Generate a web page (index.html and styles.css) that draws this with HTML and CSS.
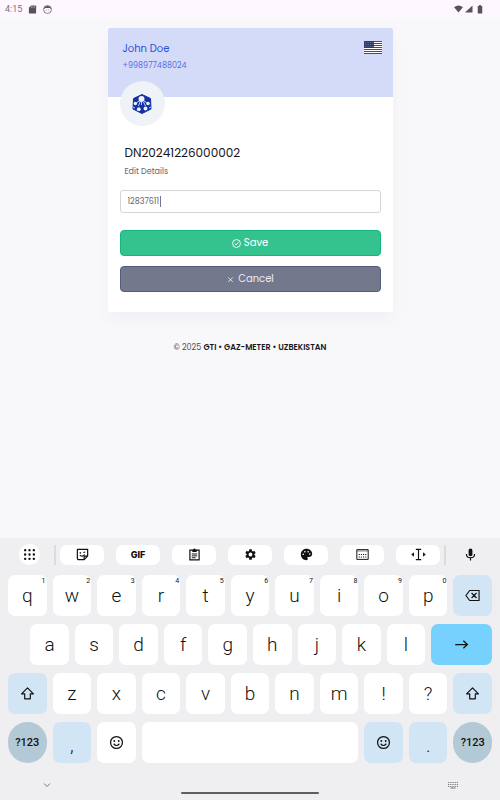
FILE: index.html
```html
<!DOCTYPE html>
<html lang="en">
<head>
  <meta charset="UTF-8">
  <meta name="viewport" content="width=device-width, initial-scale=1.0">
  <title>Edit Details</title>
  <link rel="stylesheet" href="styles.css">
</head>
<body>
  <!-- Shared icons -->
  <svg class="sprite" width="0" height="0" aria-hidden="true">
    <symbol id="shift" viewBox="0 0 24 24">
      <path d="M12 3 L21.5 12.5 H16.5 V20.5 H7.5 V12.5 H2.5 Z" fill="none" stroke="currentColor" stroke-width="1.9" stroke-linejoin="round"/>
    </symbol>
    <symbol id="smile" viewBox="0 0 24 24">
      <circle cx="12" cy="12" r="9.500" fill="none" stroke="currentColor" stroke-width="2"/>
      <circle cx="8.500" cy="9.500" r="1.500"/>
      <circle cx="15.500" cy="9.500" r="1.500"/>
      <path d="M7.500 14 Q12 19.500 16.500 14" fill="none" stroke="currentColor" stroke-width="1.900"/>
    </symbol>
  </svg>

  <header class="status-bar">
    <div class="status-left">
      <span class="clock">4:15</span>
      <svg class="status-icon" viewBox="0 0 10 10"><path d="M3.500 .5 H8 Q9 .5 9 1.500 V8.500 Q9 9.500 8 9.500 H2 Q1 9.500 1 8.500 V3 Z"/><path d="M3.800 1.500 V3 M5.500 1.500 V3 M7.200 1.500 V3" stroke="#fef7ff" stroke-width=".6"/></svg>
      <svg class="status-icon" viewBox="0 0 10 10"><circle cx="5" cy="5" r="4.400" fill="none" stroke="currentColor" stroke-width=".8"/><path d="M.8 4.600 A4.300 4.300 0 0 1 9.200 4.600 L7.500 3.400 H2.500 Z"/><circle cx="3.500" cy="5.600" r=".5"/><circle cx="6.500" cy="5.600" r=".5"/></svg>
    </div>
    <div class="status-right">
      <svg class="wifi" viewBox="0 0 10 9"><path d="M0 2.500 Q5 -1.500 10 2.500 L5 8.500 Z"/></svg>
      <svg class="signal" viewBox="0 0 9 9"><path d="M9 .5 V8.500 H.5 Z"/></svg>
      <svg class="battery" viewBox="0 0 6 10"><path d="M2 0 H4 V1 H5.500 V9.500 H.5 V1 H2 Z"/></svg>
    </div>
  </header>

  <main>
    <div class="card">
      <div class="card-top">
        <div>
          <h5 class="user-name">John Doe</h5>
          <p class="user-phone">+998977488024</p>
        </div>
        <svg class="flag" viewBox="0 0 18 13">
          <rect width="18" height="13" fill="#fff"/>
          <path d="M0 .5 H18 M0 2.500 H18 M0 4.500 H18 M0 6.500 H18 M0 8.500 H18 M0 10.500 H18 M0 12.500 H18" stroke="#bf1a2c"/>
          <rect width="10" height="7" fill="#2c3a68"/>
          <path d="M1 1.500 H10 M1 3.500 H10 M1 5.500 H10" stroke="#8f98b8" stroke-width=".7" stroke-dasharray=".7 1"/>
        </svg>
      </div>
      <div class="card-body">
        <div class="avatar">
          <svg viewBox="0 0 20 20">
            <path d="M10 .5 L18.500 4.500 L19 15 L10 19.500 L1 15 L1.500 4.500 Z" fill="#1231a5" stroke="#1231a5" stroke-linejoin="round"/>
            <g fill="#eff2f7">
              <circle cx="9.500" cy="5" r="3"/>
              <circle cx="3.400" cy="9.500" r="1.700"/>
              <circle cx="16" cy="9.500" r="1.800"/>
              <circle cx="6.800" cy="15.200" r="1.900"/>
              <circle cx="13.500" cy="14.500" r="1.900"/>
            </g>
            <path d="M9.500 8 V11 M7.500 7 L4.500 8.500 M12 7 L14.500 8.500 M8 8 L6.500 12 M11.500 8 L13.500 12 M1 13 L3 14 M19 13 L17 14" stroke="#eff2f7" stroke-width=".8"/>
          </svg>
        </div>
        <form>
          <label for="meter" class="meter-label">
            <span class="meter-number">DN20241226000002</span>
            <span class="meter-hint">Edit Details</span>
          </label>
          <div class="field">
            <input type="text" id="meter" class="form-control" value="12837611">
            <span class="caret"></span>
          </div>
          <button type="submit" class="btn btn-save">
            <svg viewBox="0 0 24 24"><circle cx="12" cy="12" r="10.500"/><path d="M7 12.500 L10.500 16 L17 8.500"/></svg>
            Save
          </button>
          <button type="button" class="btn btn-cancel">
            <svg viewBox="0 0 24 24"><path d="M6 6.500 L18 18.500 M18 6.500 L6 18.500"/></svg>
            Cancel
          </button>
        </form>
      </div>
    </div>
    <footer class="footer">© 2025 <b>GTI • GAZ-METER • UZBEKISTAN</b></footer>
  </main>

  <section class="keyboard">
    <div class="toolbar">
      <button class="tool-round" aria-label="Menu"><svg viewBox="0 0 12 12"><path d="M2 2h0 M6 2h0 M10 2h0 M2 6h0 M6 6h0 M10 6h0 M2 10h0 M6 10h0 M10 10h0" stroke="currentColor" stroke-width="2.200" stroke-linecap="round"/></svg></button>
      <div class="chips">
        <button class="chip" aria-label="Stickers"><svg viewBox="0 0 24 24"><path d="M3 2.500 H21.500 V15 L15 21.500 H5 Q2.500 21.500 2.500 19 V3 Z M21 15 H15 V21" fill="none" stroke="currentColor" stroke-width="2.200"/><circle cx="8" cy="9" r="1.400"/><path d="M13.500 8.500 L17 7.500 M7 13 Q12 17.500 16 12" fill="none" stroke="currentColor" stroke-width="2"/></svg></button>
        <button class="chip gif">GIF</button>
        <button class="chip" aria-label="Clipboard"><svg viewBox="0 0 24 24"><path d="M3.500 4 H20.500 V22 H3.500 Z" fill="none" stroke="currentColor" stroke-width="2.200"/><path d="M8 3 H10 Q10 1 12 1 Q14 1 14 3 H16 V7.500 H8 Z"/><path d="M7 11 H17 M7 14.500 H17 M7 18 H14" stroke="currentColor" stroke-width="1.800"/></svg></button>
        <button class="chip" aria-label="Settings"><svg viewBox="0 0 24 24"><path d="M19.140 12.940c.04-.3.060-.61.060-.94s-.02-.64-.07-.94l2.030-1.580c.18-.14.230-.41.120-.61l-1.920-3.320c-.12-.22-.37-.29-.59-.22l-2.390.96c-.5-.38-1.030-.7-1.620-.94l-.36-2.540c-.04-.24-.24-.41-.48-.41h-3.840c-.24 0-.43.170-.47.410l-.36 2.540c-.59.240-1.130.570-1.620.940l-2.390-.96c-.22-.08-.47 0-.59.220L2.740 8.870c-.12.210-.08.470.12.610l2.030 1.580c-.05.300-.09.630-.09.940s.02.640.07.940l-2.030 1.580c-.18.140-.23.410-.12.610l1.920 3.320c.12.220.37.290.59.220l2.390-.96c.5.380 1.030.7 1.620.940l.36 2.540c.05.240.24.410.48.410h3.840c.24 0 .44-.17.47-.41l.36-2.540c.59-.24 1.130-.56 1.620-.94l2.390.96c.22.080.47 0 .59-.22l1.920-3.320c.12-.22.070-.47-.12-.61l-2.010-1.580zM12 15.600A3.600 3.600 0 1 1 12 8.400A3.600 3.600 0 0 1 12 15.600z"/></svg></button>
        <button class="chip" aria-label="Theme"><svg viewBox="0 0 24 24"><path d="M12 1.500C6 1.500 1.500 6.500 1.500 12s4.500 10.500 10.500 10.500c1.400 0 2.500-1.100 2.500-2.500 0-.6-.2-1.200-.6-1.700-.6-.7-.1-1.800.9-1.800H17c3 0 5.500-2.500 5.500-5.500C22.500 5.500 17.500 1.500 12 1.500z"/><g fill="#fff"><circle cx="6" cy="11.500" r="1.500"/><circle cx="9" cy="7" r="1.500"/><circle cx="15" cy="7" r="1.500"/><circle cx="18" cy="11" r="1.500"/></g></svg></button>
        <button class="chip" aria-label="Resize"><svg viewBox="0 0 24 24"><path d="M1.500 3 H22.500 V21 H1.500 Z" fill="none" stroke="currentColor" stroke-width="1.800"/><path d="M2 5.500 H22" stroke="currentColor" stroke-width="1"/><path d="M5 12 H20 M5 16.500 H20" stroke="currentColor" stroke-width="2" stroke-dasharray="2 2"/></svg></button>
        <button class="chip" aria-label="Text editing"><svg class="wide" viewBox="0 0 28 24"><path d="M9 2.500 H19 M14 2.500 V21.500 M9 21.500 H19" stroke="currentColor" stroke-width="2.200"/><path d="M5.500 8 V16 L.5 12 Z M22.500 8 V16 L27.500 12 Z"/></svg></button>
      </div>
      <button class="mic" aria-label="Voice input"><svg viewBox="0 0 24 24"><rect x="8.500" y="1" width="7" height="14" rx="3.500"/><path d="M4.500 11 Q4.500 18 12 18 Q19.500 18 19.500 11 M12 18 V23" fill="none" stroke="currentColor" stroke-width="2.200"/></svg></button>
    </div>

    <div class="keys">
      <button class="key">q<sup>1</sup></button>
      <button class="key">w<sup>2</sup></button>
      <button class="key">e<sup>3</sup></button>
      <button class="key">r<sup>4</sup></button>
      <button class="key">t<sup>5</sup></button>
      <button class="key">y<sup>6</sup></button>
      <button class="key">u<sup>7</sup></button>
      <button class="key">i<sup>8</sup></button>
      <button class="key">o<sup>9</sup></button>
      <button class="key">p<sup>0</sup></button>
      <button class="key key-blue" aria-label="Backspace"><svg viewBox="0 0 24 24"><path d="M7.500 4 H22.500 V20 H7.500 L1.500 12 Z M10.500 8 L18.500 16 M18.500 8 L10.500 16" fill="none" stroke="currentColor" stroke-width="1.800"/></svg></button>

      <button class="key key-indent">a</button>
      <button class="key">s</button>
      <button class="key">d</button>
      <button class="key">f</button>
      <button class="key">g</button>
      <button class="key">h</button>
      <button class="key">j</button>
      <button class="key">k</button>
      <button class="key">l</button>
      <button class="key key-enter" aria-label="Enter"><svg viewBox="0 0 24 24"><path d="M2 12 H21 M15 6 L21.500 12 L15 18" fill="none" stroke="currentColor" stroke-width="2"/></svg></button>

      <button class="key key-blue" aria-label="Shift"><svg><use href="#shift"/></svg></button>
      <button class="key">z</button>
      <button class="key">x</button>
      <button class="key">c</button>
      <button class="key">v</button>
      <button class="key">b</button>
      <button class="key">n</button>
      <button class="key">m</button>
      <button class="key">!</button>
      <button class="key">?</button>
      <button class="key key-blue" aria-label="Shift"><svg><use href="#shift"/></svg></button>

      <button class="key key-symbols">?123</button>
      <button class="key key-blue key-low">,</button>
      <button class="key" aria-label="Emoji"><svg><use href="#smile"/></svg></button>
      <button class="key key-space" aria-label="Space"></button>
      <button class="key key-blue" aria-label="Emoji"><svg><use href="#smile"/></svg></button>
      <button class="key key-blue key-low">.</button>
      <button class="key key-symbols">?123</button>
    </div>

    <div class="nav-bar">
      <button aria-label="Hide keyboard"><svg viewBox="0 0 10 10"><path d="M2 3.500 L5 6.500 L8 3.500" fill="none" stroke="currentColor"/></svg></button>
      <span class="home-pill"></span>
      <button aria-label="Switch keyboard"><svg viewBox="0 0 10 10"><path d="M0 2.500 H10 M0 4.500 H10 M0 6.500 H10" stroke="currentColor" stroke-dasharray="1 .8"/><path d="M2.500 8 H7.500" stroke="currentColor"/></svg></button>
    </div>
  </section>
</body>
</html>
```
FILE: styles.css
```css
* {
  box-sizing: border-box;
}

body {
  margin: 0;
  min-height: 100vh;
  display: flex;
  flex-direction: column;
  background-color: #f8f8fb;
  font-family: Poppins, Inter, "Open Sans", sans-serif;
  font-size: 8px;
  color: #495057;
}

button {
  margin: 0;
  padding: 0;
  border: none;
  background: none;
  font-family: inherit;
  color: inherit;
  cursor: pointer;
}

svg {
  display: block;
  fill: currentColor;
}

.sprite {
  position: absolute;
}

/* Status bar */
.status-bar {
  display: flex;
  justify-content: space-between;
  align-items: center;
  height: 18px;
  padding: 0 17px 0 5px;
  background-color: #fef7ff;
  color: #57535a;
}

.status-left,
.status-right {
  display: flex;
  align-items: center;
}

.status-left {
  gap: 6px;
}

.status-right {
  gap: 1px;
}

.clock {
  font-family: Roboto, sans-serif;
  font-size: 9px;
  color: #77737a;
}

.status-icon {
  width: 9px;
  height: 9px;
}

.wifi,
.signal {
  width: 9px;
  height: 8px;
}

.battery {
  width: 6px;
  height: 9px;
  margin-left: 3px;
}

/* Card */
main {
  flex: 1;
}

.card {
  width: 57%;
  margin: 10px auto 0;
  background-color: #fff;
  border-radius: 2px;
  box-shadow: 0 8px 16px rgba(18, 38, 63, 0.03);
}

.card-top {
  display: flex;
  justify-content: space-between;
  height: 69px;
  padding: 13px 11px 0 15px;
  background-color: #d4dbf9;
  border-radius: 2px 2px 0 0;
}

.user-name {
  margin: 0 0 4px;
  font-size: 10px;
  line-height: 15px;
  font-weight: 400;
  color: #2a4fd8;
}

.user-phone {
  margin: 0;
  font-size: 8px;
  line-height: 12px;
  color: #556ee6;
}

.flag {
  width: 18px;
  height: 13px;
}

.card-body {
  padding: 0 12px 20px;
}

.avatar {
  display: flex;
  justify-content: center;
  align-items: center;
  width: 45px;
  height: 45px;
  margin-top: -16px;
  border-radius: 50%;
  background-color: #eff2f7;
}

.avatar svg {
  width: 20px;
  height: 20px;
}

.meter-label {
  display: block;
  margin: 18px 5px 12px;
}

.meter-number,
.meter-hint {
  display: block;
}

.meter-number {
  font-size: 12px;
  line-height: 18px;
  color: #14161c;
}

.meter-hint {
  margin-top: 4px;
  line-height: 12px;
  color: #62666d;
}

.field {
  position: relative;
  margin-bottom: 17px;
}

.form-control {
  display: block;
  width: 100%;
  height: 23px;
  padding: 0 7px;
  border: 1px solid #d2d5d9;
  border-radius: 3px;
  background-color: #fff;
  font-family: inherit;
  font-size: 8px;
  color: #62666d;
}

.caret {
  position: absolute;
  left: 40px;
  top: 6px;
  width: 1px;
  height: 11px;
  background-color: #74788d;
}

.btn {
  display: flex;
  justify-content: center;
  align-items: center;
  gap: 3px;
  width: 100%;
  height: 26px;
  border: 1px solid;
  border-radius: 4px;
  font-size: 10px;
  color: #fff;
}

.btn svg {
  width: 9px;
  height: 9px;
  fill: none;
  stroke: currentColor;
  stroke-width: 2.4;
}

.btn-save {
  margin-bottom: 10px;
  background-color: #34c38f;
  border-color: #12b87b;
}

.btn-cancel {
  background-color: #74788d;
  border-color: #555b7c;
  color: #e9eaf2;
}

.footer {
  margin-top: 30px;
  text-align: center;
  line-height: 12px;
}

.footer b {
  font-weight: 600;
  color: #14161c;
}

/* Keyboard */
.keyboard {
  padding: 6px 8px 0;
  background-color: #efeff1;
  color: #111;
  font-family: Roboto, sans-serif;
}

.toolbar {
  display: flex;
  align-items: center;
  height: 21px;
  margin-bottom: 10px;
  padding: 0 15px 0 11px;
}

.toolbar svg {
  width: 13px;
  height: 13px;
}

.toolbar .wide {
  width: 15px;
}

.tool-round {
  display: flex;
  justify-content: center;
  align-items: center;
  width: 21px;
  height: 21px;
  border-radius: 50%;
  background-color: #fff;
}

.chips {
  flex: 1;
  display: flex;
  gap: 12px;
  margin: 0 18px 0 14px;
  padding: 0 4px;
  border: solid #dcdcde;
  border-width: 0 2px;
}

.chip {
  flex: 1;
  display: flex;
  justify-content: center;
  align-items: center;
  height: 20px;
  border-radius: 7px;
  background-color: #fff;
}

.gif {
  font-family: Inter, sans-serif;
  font-size: 9px;
  font-weight: 800;
}

.keys {
  display: grid;
  grid-template-columns: repeat(22, 1fr);
  gap: 8px 6px;
}

.key {
  position: relative;
  grid-column: span 2;
  display: flex;
  justify-content: center;
  align-items: center;
  height: 41px;
  border-radius: 7px;
  background-color: #fff;
  font-size: 19px;
  font-weight: 300;
}

.key sup {
  position: absolute;
  top: 2px;
  right: 1px;
  font-size: 7px;
  font-weight: 400;
  line-height: 8px;
}

.key svg {
  width: 15px;
  height: 15px;
}

.key-indent {
  grid-column: 2 / span 2;
}

.key-blue {
  background-color: #d2e5f4;
}

.key-enter {
  grid-column: span 3;
  background-color: #76d1ff;
}

.key-space {
  grid-column: span 10;
}

.key-low {
  padding-top: 6px;
}

.key-symbols {
  border-radius: 20px;
  background-color: #b4c9d6;
  font-size: 11px;
  font-weight: 500;
}

.nav-bar {
  display: flex;
  justify-content: space-between;
  align-items: center;
  height: 37px;
  padding: 7px 34px 0;
  color: #77777a;
}

.nav-bar svg {
  width: 10px;
  height: 10px;
}

.home-pill {
  width: 138px;
  height: 2px;
  margin-top: 16px;
  border-radius: 1px;
  background-color: #5e5e60;
}
```
